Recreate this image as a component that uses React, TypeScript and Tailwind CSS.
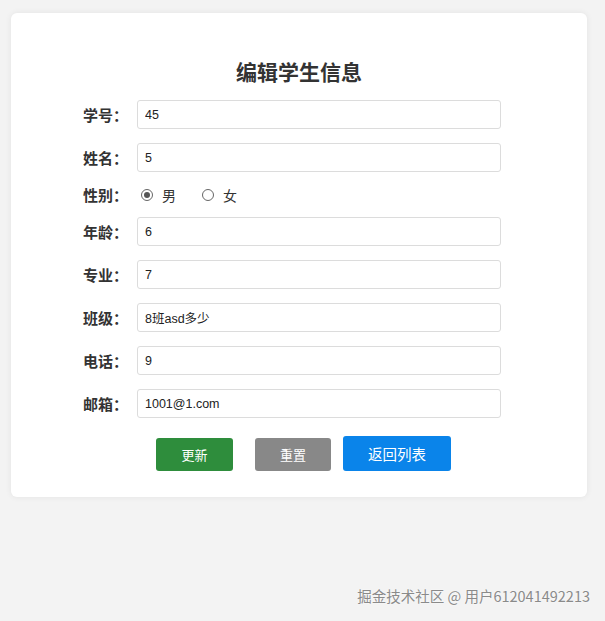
import React from "react";

const fields = [
  { label: "学号：", value: "45" },
  { label: "姓名：", value: "5" },
];

const fields2 = [
  { label: "年龄：", value: "6" },
  { label: "专业：", value: "7" },
  { label: "班级：", value: "8班asd多少" },
  { label: "电话：", value: "9" },
  { label: "邮箱：", value: "1001@1.com" },
];

const cjk = "font-['Liberation_Sans','Noto_Sans_CJK_SC',sans-serif]";

function Row({ label, value }: { label: string; value: string }) {
  return (
    <div className="flex items-center mb-[14px]">
      <label className="w-[54px] text-[15px] font-bold text-[#333] leading-none">{label}</label>
      <input
        defaultValue={value}
        className={`w-[364px] h-[29px] border border-[#dcdcdc] rounded-[3px] px-[7px] text-[12.5px] text-[#222] outline-none ${cjk}`}
      />
    </div>
  );
}

function Radio({ checked, text }: { checked?: boolean; text: string }) {
  return (
    <span className="flex items-center">
      <span className="w-[12px] h-[12px] rounded-full border border-[#666] flex items-center justify-center bg-white">
        {checked && <span className="w-[6px] h-[6px] rounded-full bg-[#555]" />}
      </span>
      <span className="ml-[9px] text-[14px] text-[#333] leading-none">{text}</span>
    </span>
  );
}

export default function App() {
  return (
    <div className="relative min-h-screen bg-[#f3f3f3] pt-[13px] font-['Noto_Sans_CJK_SC',sans-serif]">
      <div className="ml-[11px] w-[576px] bg-white rounded-[6px] shadow-[0_0_6px_rgba(0,0,0,0.07)] pt-[45px] pb-[26px]">
        <h2 className="text-center text-[21px] font-bold text-[#333] h-[26px] leading-[26px] mb-[16px]">
          编辑学生信息
        </h2>

        <div className="pl-[72px]">
          {fields.map((f) => (
            <Row key={f.label} {...f} />
          ))}

          <div className="flex items-center h-[17px] mb-[14px]">
            <label className="w-[54px] text-[15px] font-bold text-[#333] leading-none">性别：</label>
            <div className="flex items-center gap-[26px] pl-[4px]">
              <Radio checked text="男" />
              <Radio text="女" />
            </div>
          </div>

          {fields2.map((f) => (
            <Row key={f.label} {...f} />
          ))}
        </div>

        <div className="flex items-end pl-[145px] mt-[18px]">
          <button className="w-[77px] h-[33px] rounded-[3px] bg-[#2e8d3c] text-white text-[13px]">
            更新
          </button>
          <button className="ml-[22px] w-[76px] h-[33px] rounded-[3px] bg-[#888888] text-white text-[13px]">
            重置
          </button>
          <button className="ml-[12px] w-[108px] h-[35px] rounded-[3px] bg-[#0a84ea] text-white text-[14.5px]">
            返回列表
          </button>
        </div>
      </div>

      <div className="absolute right-[15px] bottom-[14px] text-[14.5px] text-[#8a8a8a] [text-shadow:0_0_2px_#fff]">
        掘金技术社区 @ 用户612041492213
      </div>
    </div>
  );
}
